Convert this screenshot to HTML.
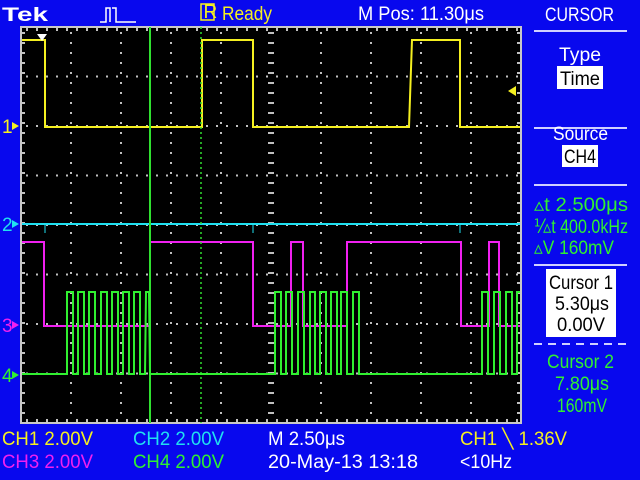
<!DOCTYPE html>
<html><head><meta charset="utf-8"><style>
html,body{margin:0;padding:0;background:#0808ee;width:640px;height:480px;overflow:hidden}
svg{display:block}
text{font-family:"Liberation Sans",sans-serif;font-size:19px}
</style></head><body>
<svg width="640" height="480" viewBox="0 0 640 480" xmlns="http://www.w3.org/2000/svg">
<rect width="640" height="480" fill="#0808ee"/>
<rect x="21" y="27" width="500" height="396" fill="#000"/>
<g stroke="#c0c0c0" stroke-width="2" stroke-dasharray="2 8">
<line x1="71" y1="32" x2="71" y2="420"/><line x1="121" y1="32" x2="121" y2="420"/><line x1="171" y1="32" x2="171" y2="420"/><line x1="221" y1="32" x2="221" y2="420"/>
<line x1="321" y1="32" x2="321" y2="420"/><line x1="371" y1="32" x2="371" y2="420"/><line x1="421" y1="32" x2="421" y2="420"/><line x1="471" y1="32" x2="471" y2="420"/>
<line x1="26" y1="76.5" x2="520" y2="76.5"/><line x1="26" y1="126" x2="520" y2="126"/><line x1="26" y1="175.5" x2="520" y2="175.5"/><line x1="26" y1="225" x2="520" y2="225"/>
<line x1="26" y1="274.5" x2="520" y2="274.5"/><line x1="26" y1="324" x2="520" y2="324"/><line x1="26" y1="373.5" x2="520" y2="373.5"/>
</g>
<line x1="271" y1="32" x2="271" y2="420" stroke="#c0c0c0" stroke-width="6" stroke-dasharray="2 8"/>
<g stroke="#c0c0c0" stroke-width="4" stroke-dasharray="2 8">
<line x1="26" y1="29" x2="520" y2="29"/><line x1="26" y1="421" x2="520" y2="421"/>
<line x1="23" y1="32" x2="23" y2="420"/><line x1="519" y1="32" x2="519" y2="420"/>
</g>
<rect x="21" y="27" width="500" height="396" fill="none" stroke="#c8c8c8" stroke-width="2"/>
<polyline fill="none" stroke="#f5f020" stroke-width="2" points="22,40 45,40 45,127 202,127 202,40 253,40 253,127 409,127 412,40 460,40 460,127 520,127"/>
<polyline fill="none" stroke="#20e0f0" stroke-width="2" points="22,224 520,224"/>
<g stroke="#20e0f0" stroke-width="1"><line x1="45" y1="224" x2="45" y2="233"/><line x1="253" y1="224" x2="253" y2="233"/><line x1="460" y1="224" x2="460" y2="233"/></g>
<polyline fill="none" stroke="#f020f0" stroke-width="2" points="22,242 44,242 44,326 150,326 150,242 253,242 253,326 291,326 291,242 303,242 303,326 347,326 347,242 461,242 461,326 489,326 489,242 499,242 499,326 520,326"/>
<line x1="150" y1="27" x2="150" y2="423" stroke="#30e030" stroke-width="2"/>
<line x1="201" y1="27" x2="201" y2="423" stroke="#30e030" stroke-width="1.5" stroke-dasharray="2 3"/>
<polyline fill="none" stroke="#30f030" stroke-width="2" points="22,374 67,374 67,292 73,292 73,374 78,374 78,292 84,292 84,374 89,374 89,292 95,292 95,374 101,374 101,292 107,292 107,374 112,374 112,292 118,292 118,374 123,374 123,292 129,292 129,374 134,374 134,292 140,292 140,374 145,374 146,292 149,292 150,374 275,374 275,292 281,292 281,374 286,374 286,292 292,292 292,374 298,374 298,292 304,292 304,374 310,374 310,292 315,292 315,374 320,374 320,292 326,292 326,374 331,374 331,292 337,292 337,374 341,374 341,292 347,292 347,374 353,374 353,292 359,292 359,374 482,374 482,292 488,292 488,374 494,374 494,292 500,292 500,374 506,374 506,292 512,292 512,374 517,374 517,292 520,292"/>
<polygon points="37,34 47,34 42,41" fill="#fff"/>
<polygon points="508,91 516,86 516,96" fill="#f5f020"/>
<text x="2" y="133" fill="#f5f020" font-size="17">1</text><polygon points="12,122 19,126 12,130" fill="#f5f020"/>
<text x="2" y="231" fill="#20e0f0" font-size="17">2</text><polygon points="12,220 19,224 12,228" fill="#20e0f0"/>
<text x="2" y="332" fill="#f020f0" font-size="17">3</text><polygon points="12,321 19,325 12,329" fill="#f020f0"/>
<text x="2" y="382" fill="#30f030" font-size="17">4</text><polygon points="12,371 19,375 12,379" fill="#30f030"/>
<text x="2" y="21" fill="#fff" font-family="Liberation Serif,serif" font-weight="bold" font-size="24" textLength="46" lengthAdjust="spacingAndGlyphs">Tek</text>
<path d="M100,22 L106,22 L106,8 L110,8 L110,22 M112,8 L116,8 L116,22 L136,22" fill="none" stroke="#fff" stroke-width="1.5"/>
<rect x="201" y="4" width="13" height="16" fill="none" stroke="#f5f020" stroke-width="1.5"/>
<text x="203.5" y="18" fill="#f5f020" font-size="13">R</text>
<g lengthAdjust="spacingAndGlyphs">
<text x="222" y="20" fill="#f5f020" textLength="50" lengthAdjust="spacingAndGlyphs">Ready</text>
<text x="358" y="20" fill="#fff" textLength="126" lengthAdjust="spacingAndGlyphs">M Pos: 11.30μs</text>
<text x="545" y="21" fill="#fff" textLength="69" lengthAdjust="spacingAndGlyphs">CURSOR</text>
</g>
<g stroke="#d0d0ff" stroke-width="2">
<line x1="534" y1="31" x2="627" y2="31"/><line x1="534" y1="128" x2="627" y2="128"/>
<line x1="534" y1="185" x2="627" y2="185"/><line x1="534" y1="265" x2="627" y2="265"/>
<line x1="534" y1="344" x2="627" y2="344" stroke-dasharray="8 6"/>
</g>
<text x="559" y="61" fill="#fff" textLength="42" lengthAdjust="spacingAndGlyphs">Type</text>
<rect x="557" y="66" width="46" height="23" fill="#fff"/>
<text x="560" y="85" fill="#000" textLength="40" lengthAdjust="spacingAndGlyphs">Time</text>
<text x="553" y="140" fill="#fff" textLength="55" lengthAdjust="spacingAndGlyphs">Source</text>
<rect x="562" y="145" width="36" height="22" fill="#fff"/>
<text x="564" y="163" fill="#000" textLength="32" lengthAdjust="spacingAndGlyphs">CH4</text>
<text x="534" y="211" fill="#30f030" textLength="94" lengthAdjust="spacingAndGlyphs">▵t 2.500μs</text>
<text x="534" y="233" fill="#30f030" textLength="94" lengthAdjust="spacingAndGlyphs">⅟▵t 400.0kHz</text>
<text x="534" y="254" fill="#30f030" textLength="80" lengthAdjust="spacingAndGlyphs">▵V 160mV</text>
<rect x="546" y="269" width="70" height="68" fill="#fff"/>
<text x="549" y="289" fill="#000" textLength="64" lengthAdjust="spacingAndGlyphs">Cursor 1</text>
<text x="555" y="310" fill="#000" textLength="54" lengthAdjust="spacingAndGlyphs">5.30μs</text>
<text x="557" y="331" fill="#000" textLength="48" lengthAdjust="spacingAndGlyphs">0.00V</text>
<text x="547" y="368" fill="#30f030" textLength="67" lengthAdjust="spacingAndGlyphs">Cursor 2</text>
<text x="555" y="390" fill="#30f030" textLength="54" lengthAdjust="spacingAndGlyphs">7.80μs</text>
<text x="557" y="412" fill="#30f030" textLength="50" lengthAdjust="spacingAndGlyphs">160mV</text>
<text x="2" y="445" fill="#f5f020" textLength="91" lengthAdjust="spacingAndGlyphs">CH1  2.00V</text>
<text x="133" y="445" fill="#20e0f0" textLength="91" lengthAdjust="spacingAndGlyphs">CH2  2.00V</text>
<text x="268" y="445" fill="#fff" textLength="77" lengthAdjust="spacingAndGlyphs">M 2.50μs</text>
<text x="460" y="445" fill="#f5f020" textLength="107" lengthAdjust="spacingAndGlyphs">CH1 ╲ 1.36V</text>
<text x="2" y="468" fill="#f020f0" textLength="91" lengthAdjust="spacingAndGlyphs">CH3  2.00V</text>
<text x="133" y="468" fill="#30f030" textLength="91" lengthAdjust="spacingAndGlyphs">CH4  2.00V</text>
<text x="268" y="468" fill="#fff" textLength="150" lengthAdjust="spacingAndGlyphs">20-May-13 13:18</text>
<text x="460" y="468" fill="#fff" textLength="52" lengthAdjust="spacingAndGlyphs">&lt;10Hz</text>
</svg>
</body></html>
